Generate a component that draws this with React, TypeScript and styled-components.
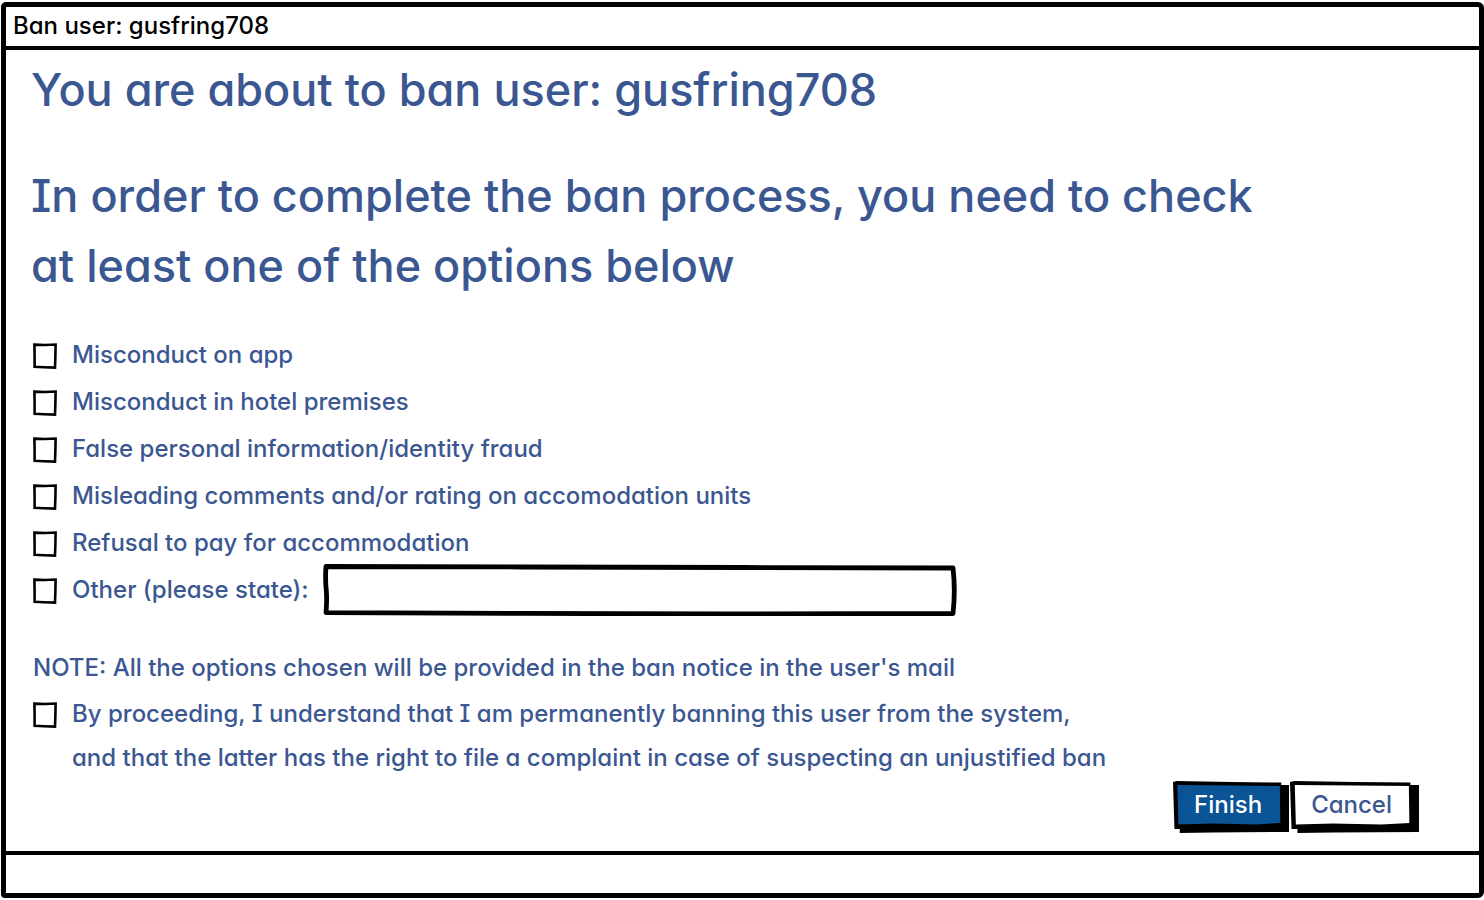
import React from "react";
import styled, { createGlobalStyle, css } from "styled-components";

const ink = "#000000";
const blue = "#3b5791";
const primary = "#0a5496";

const svg = (width: number, height: number, shapes: string) =>
  `url("data:image/svg+xml,${encodeURIComponent(
    `<svg xmlns='http://www.w3.org/2000/svg' viewBox='0 0 ${width} ${height}' preserveAspectRatio='none'>${shapes}</svg>`
  )}")`;

const boxOutline = `<path d='M1.4 1.6 L12 2 L22.6 1.5 L22.4 13 L22 24.6 L11 24.2 L1.6 23.8 L1.6 12 Z' fill='none' stroke='${ink}' stroke-width='2.6'/>`;

const boxSketch = svg(24, 26, boxOutline);

const tickedSketch = svg(
  24,
  26,
  `${boxOutline}<path d='M5 13 L10 19 L19 6' fill='none' stroke='${ink}' stroke-width='3'/>`
);

const fieldSketch = svg(
  634,
  52,
  `<path d='M3 2.5 L200 3 L420 3.5 L630 4 Q632.6 26 630 49.5 L400 50 L200 49.4 L3 48.6 Q4 38 3.4 28 Q2 14 3 2.5 Z' fill='#ffffff' stroke='${ink}' stroke-width='4.8' stroke-linejoin='round'/>`
);

const buttonSketch = (fill: string) =>
  svg(
    120,
    52,
    `<path d='M112 4 L120 4 L120 51 L40 51.4 L7 52 L7 48 L1.5 48 L0 1 L4 0 L60 1 L112 1.5 Z' fill='${ink}'/><path d='M4.5 4 L60 4.5 L110.5 5 L111 42 L85 43.5 L40 42.5 L5.5 43.5 Z' fill='${fill}'/>`
  );

const GlobalStyle = createGlobalStyle`
  *, *::before, *::after { box-sizing: border-box; }
  body {
    margin: 0;
    background: #ffffff;
    font-family: Inter, "Open Sans", sans-serif;
    font-feature-settings: "cv11", "cv08";
  }
`;

const Page = styled.div`
  display: flex;
  min-height: 100vh;
  padding: 2px 0 2px 1px;
`;

const Dialog = styled.main`
  flex: 1;
  display: flex;
  flex-direction: column;
  border: 5px solid ${ink};
  border-radius: 5px 6px 6px 4px;
`;

const TitleBar = styled.header`
  height: 43px;
  padding: 0 7px;
  border-bottom: 4px solid ${ink};
  color: ${ink};
  font-size: 24px;
  font-weight: 500;
  line-height: 37px;
`;

const Content = styled.form`
  flex: 1;
  display: flex;
  flex-direction: column;
  padding: 5px 60px 18px 25px;
  color: ${blue};
`;

const Headings = styled.div`
  display: flex;
  flex-direction: column;
  gap: 36px;
  max-width: 1250px;
  margin-bottom: 30px;
`;

const Heading = styled.h1`
  margin: 0;
  font-size: 45px;
  font-weight: 500;
  line-height: 70px;
`;

const Options = styled.fieldset`
  display: flex;
  flex-direction: column;
  min-width: 0;
  margin: 0;
  padding: 0 0 0 2px;
  border: 0;
`;

const bodyText = css`
  font-size: 24px;
  font-weight: 500;
  line-height: 44px;
`;

const Row = styled.div`
  display: flex;
  align-items: center;
  height: 47px;
`;

const Label = styled.label<{ $wrap?: boolean }>`
  ${bodyText}
  display: flex;
  align-items: ${(p) => (p.$wrap ? "flex-start" : "center")};
  gap: 15px;
`;

const Check = styled.input.attrs({ type: "checkbox" })<{ $inLine?: boolean }>`
  appearance: none;
  flex: none;
  width: 24px;
  height: 26px;
  margin: ${(p) => (p.$inLine ? "10px 0 0" : "2px 0 0")};
  background: ${boxSketch} center / 100% 100% no-repeat;
  cursor: pointer;
  &:checked { background-image: ${tickedSketch}; }
`;

const OtherField = styled.input.attrs({ type: "text" })`
  flex: 0 1 634px;
  min-width: 0;
  height: 52px;
  margin-left: 14px;
  padding: 0 14px;
  border: 0;
  background: ${fieldSketch} center / 100% 100% no-repeat;
  color: ${blue};
  font: inherit;
  font-size: 24px;
`;

const Note = styled.p`
  ${bodyText}
  margin: 33px 0 2px 2px;
`;

const Consent = styled.div`
  padding-left: 2px;
`;

const Actions = styled.div`
  display: flex;
  justify-content: flex-end;
  gap: 1px;
  margin-top: 1px;
`;

const Button = styled.button<{ $primary?: boolean }>`
  height: 52px;
  padding: 0 27px 5px 21px;
  border: 0;
  background: ${(p) => buttonSketch(p.$primary ? primary : "#ffffff")} center / 100% 100% no-repeat;
  color: ${(p) => (p.$primary ? "#ffffff" : blue)};
  font: inherit;
  font-size: 24px;
  font-weight: 500;
  font-feature-settings: inherit;
  cursor: pointer;
`;

const StatusBar = styled.footer`
  height: 42px;
  border-top: 4px solid ${ink};
`;

const reasons = [
  "Misconduct on app",
  "Misconduct in hotel premises",
  "False personal information/identity fraud",
  "Misleading comments and/or rating on accomodation units",
  "Refusal to pay for accommodation",
];

export default function App() {
  return (
    <Page>
      <GlobalStyle />
      <Dialog>
        <TitleBar>Ban user: gusfring708</TitleBar>
        <Content onSubmit={(e) => e.preventDefault()}>
          <Headings>
            <Heading>You are about to ban user: gusfring708</Heading>
            <Heading as="h2">
              In order to complete the ban process, you need to check at least one of the options below
            </Heading>
          </Headings>
          <Options aria-label="Ban reasons">
            {reasons.map((reason) => (
              <Row key={reason}>
                <Label>
                  <Check />
                  {reason}
                </Label>
              </Row>
            ))}
            <Row>
              <Label>
                <Check />
                Other (please state):
              </Label>
              <OtherField aria-label="Other reason" />
            </Row>
          </Options>
          <Note>NOTE: All the options chosen will be provided in the ban notice in the user's mail</Note>
          <Consent>
            <Label $wrap>
              <Check $inLine />
              <span>
                By proceeding, I understand that I am permanently banning this user from the system,
                <br />
                and that the latter has the right to file a complaint in case of suspecting an unjustified ban
              </span>
            </Label>
          </Consent>
          <Actions>
            <Button type="submit" $primary>Finish</Button>
            <Button type="button">Cancel</Button>
          </Actions>
        </Content>
        <StatusBar />
      </Dialog>
    </Page>
  );
}
